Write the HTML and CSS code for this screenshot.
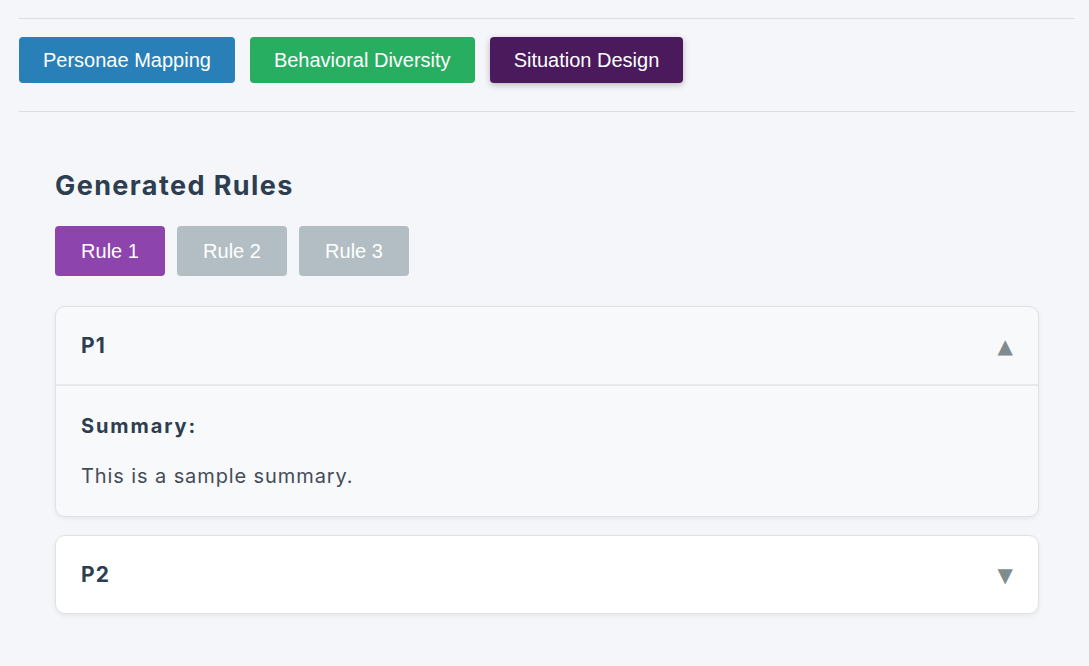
FILE: index.html
```html
<!DOCTYPE html>
<html>
<head>
<meta charset="utf-8">
<link rel="stylesheet" href="styles.css">
</head>
<body>
<div class="page">
  <nav class="tabs">
    <button class="tab tab-blue">Personae Mapping</button>
    <button class="tab tab-green">Behavioral Diversity</button>
    <button class="tab tab-purple active">Situation Design</button>
  </nav>
  <section class="panel">
    <h2 class="title">Generated Rules</h2>
    <div class="rules">
      <button class="rule active">Rule 1</button>
      <button class="rule">Rule 2</button>
      <button class="rule">Rule 3</button>
    </div>
    <div class="card open">
      <div class="card-head">
        <span class="card-name">P1</span>
        <span class="arrow">▲</span>
      </div>
      <div class="card-body">
        <div class="label">Summary:</div>
        <p class="text">This is a sample summary.</p>
      </div>
    </div>
    <div class="card">
      <div class="card-head">
        <span class="card-name">P2</span>
        <span class="arrow">▼</span>
      </div>
    </div>
  </section>
</div>
</body>
</html>
```
FILE: styles.css
```css
* { box-sizing: border-box; }
html, body { margin: 0; padding: 0; }
body {
  background: #f5f6fa;
  font-family: "Inter", "Liberation Sans", sans-serif;
  color: #2c3e50;
}
.page { padding: 18px 14px 0 19px; }
.tabs {
  display: flex;
  gap: 15px;
  padding: 18px 0 28px;
  border-top: 1px solid #dcdde1;
  border-bottom: 1px solid #dcdde1;
}
.tab {
  font-family: "Liberation Sans", Arial, sans-serif;
  font-size: 20px;
  color: #fff;
  border: none;
  border-radius: 4px;
  height: 46px;
  padding: 0 24px;
  cursor: pointer;
}
.tab-blue { background: #2980b9; }
.tab-green { background: #27ae60; }
.tab-purple { background: #4a1a5c; }
.tab.active { box-shadow: 0 2px 6px rgba(0,0,0,0.25); }
.panel { padding: 36px 36px 0 36px; }
.title {
  margin: 22px 0 24px;
  font-size: 27px;
  font-weight: 700;
  letter-spacing: 1.4px;
  line-height: 32px;
  color: #2c3e50;
}
.rules { display: flex; gap: 12px; margin-bottom: 30px; }
.rule {
  font-family: "Liberation Sans", Arial, sans-serif;
  font-size: 20px;
  color: #fff;
  background: #b2bec3;
  border: none;
  border-radius: 4px;
  width: 110px;
  height: 50px;
  cursor: pointer;
}
.rule.active { background: #8e44ad; }
.card {
  background: #fff;
  border: 1px solid #dfe1e5;
  border-radius: 10px;
  box-shadow: 0 2px 5px rgba(0,0,0,0.06);
  margin-bottom: 18px;
  overflow: hidden;
}
.card.open { background: #f8f9fb; }
.card-head {
  display: flex;
  justify-content: space-between;
  align-items: center;
  height: 77px;
  padding: 0 26px 0 25px;
}
.open .card-head { height: 79px; border-bottom: 2px solid #e8e9ed; }
.card-name { font-size: 21px; font-weight: 700; letter-spacing: 1.2px; color: #2c3e50; }
.arrow { font-size: 20px; color: #7f8c8d; font-family: "DejaVu Sans", sans-serif; margin-right: -1px; }
.card-body { padding: 26px 25px 26px; }
.label { font-size: 20px; font-weight: 700; letter-spacing: 1.9px; color: #2c3e50; line-height: 28px; }
.text { margin: 22px 0 0; font-size: 20px; letter-spacing: 0.9px; color: #444c58; line-height: 28px; }
```
